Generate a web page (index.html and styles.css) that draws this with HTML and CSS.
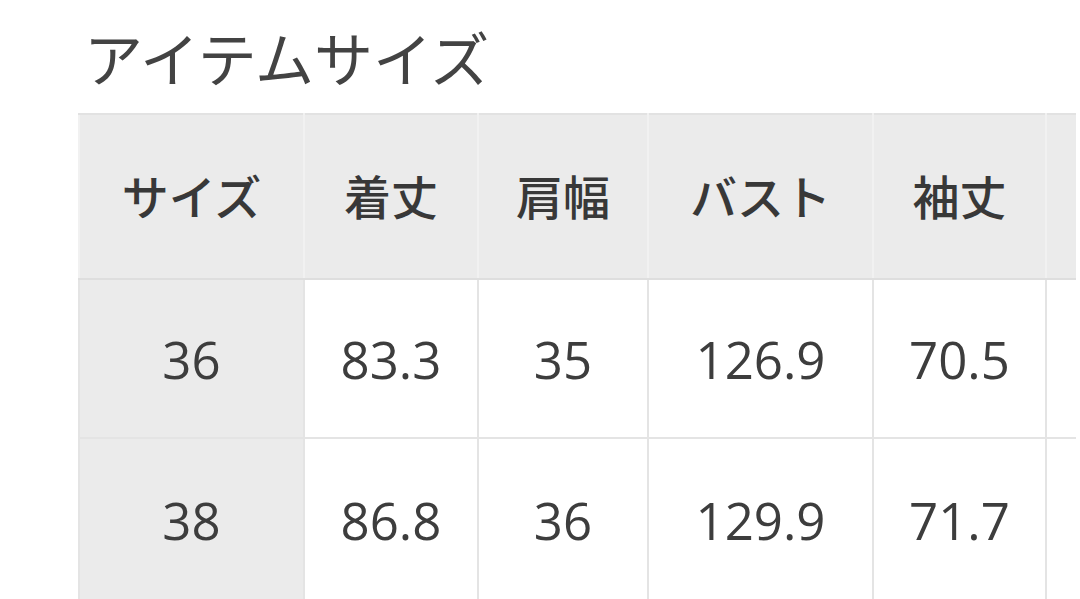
FILE: index.html
```html
<!DOCTYPE html>
<html lang="ja">
<head>
<meta charset="utf-8">
<link rel="stylesheet" href="styles.css">
</head>
<body>
<main class="page">
  <h1 class="title">アイテムサイズ</h1>
  <div class="table-wrap">
    <table class="size-table">
      <colgroup>
        <col class="c1"><col class="c2"><col class="c3"><col class="c4"><col class="c5"><col class="c6">
      </colgroup>
      <thead>
        <tr>
          <th>サイズ</th><th>着丈</th><th>肩幅</th><th>バスト</th><th>袖丈</th><th></th>
        </tr>
      </thead>
      <tbody>
        <tr class="r1">
          <th>36</th><td>83.3</td><td>35</td><td>126.9</td><td>70.5</td><td></td>
        </tr>
        <tr class="r2">
          <th>38</th><td>86.8</td><td>36</td><td>129.9</td><td>71.7</td><td></td>
        </tr>
      </tbody>
    </table>
  </div>
</main>
</body>
</html>
```

FILE: styles.css
```css
html, body {
  margin: 0;
  padding: 0;
  background: #ffffff;
}
body {
  width: 1080px;
  height: 599px;
  overflow: hidden;
  font-family: "Noto Sans CJK JP", "Noto Sans", sans-serif;
  color: #3b3b3b;
}
.page {
  padding-left: 78px;
}
.title {
  margin: 0;
  padding: 26px 0 0 6px;
  height: 113px;
  box-sizing: border-box;
  font-size: 59px;
  line-height: 62px;
  font-weight: 400;
  color: #434343;
  letter-spacing: 0;
}
.table-wrap {
  width: 998px;
  overflow: hidden;
}
.size-table {
  border-collapse: collapse;
  table-layout: fixed;
  width: 1160px;
}
.c1 { width: 225px; }
.c2 { width: 174px; }
.c3 { width: 170px; }
.c4 { width: 225px; }
.c5 { width: 173px; }
.c6 { width: 193px; }
.size-table th,
.size-table td {
  border: 2px solid #e4e4e4;
  text-align: center;
  vertical-align: middle;
  padding: 0;
}
.size-table thead th {
  background: #ebebeb;
  height: 159px;
  padding-bottom: 4px;
  font-size: 47px;
  font-weight: 500;
  color: #383838;
  border-color: #e2e2e2 #f1f1f1 #dedede #f1f1f1;
}
.size-table tbody th {
  background: #ebebeb;
  font-weight: 400;
}
.size-table tbody th,
.size-table tbody td {
  font-family: "Open Sans", "Noto Sans", sans-serif;
  font-size: 51px;
  color: #3d3d3d;
}
.r1 th, .r1 td { height: 157px; }
.r2 th, .r2 td { height: 162px; }
.size-table tbody td {
  background: #ffffff;
}
```
